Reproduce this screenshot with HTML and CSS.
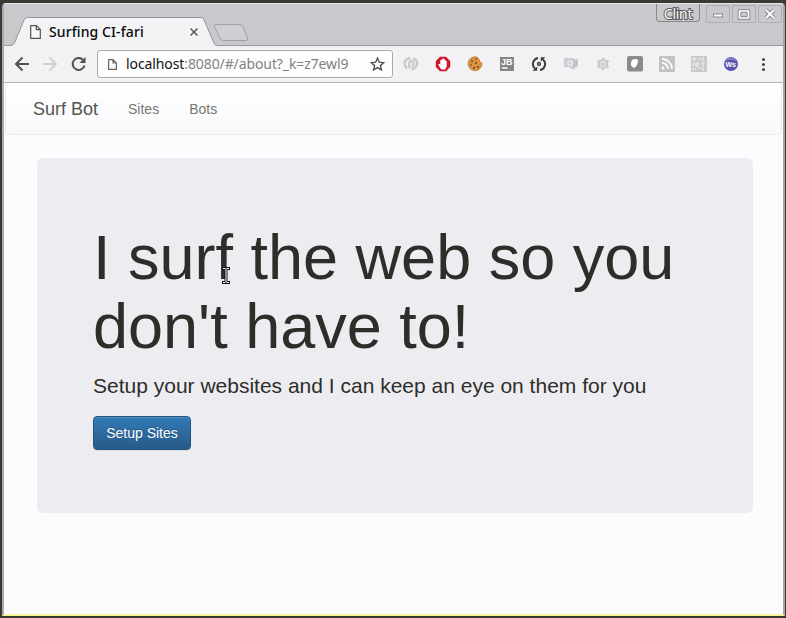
FILE: index.html
```html
<!DOCTYPE html>
<html lang="en">
<head>
<meta charset="utf-8">
<title>Surfing CI-fari</title>
<link rel="stylesheet" href="styles.css">
</head>
<body>
<div class="window">
  <div class="tabstrip">
    <div class="tab">
      <svg class="tab-shape" width="208" height="29" viewBox="0 0 208 29"><path d="M0 28.5H2Q3.500 28.500 4.500 26L14 3Q15 .5 17 .5H191Q193 .5 194 3L204 26Q205 28.500 207 28.500V29H0Z" fill="#f3f3f6"/><path d="M0 28.500Q3.500 28.500 4.500 26L14 3Q15 .5 17 .5H191Q193 .5 194 3L204 26Q205 28.500 207 28.500H208" fill="none" stroke="#96969a"/></svg>
      <svg class="tab-page" width="11" height="14" viewBox="0 0 11 14"><path d="M.7.7H6.500L10.300 4.500V13.300H.7ZM6.300.7V4.700H10.300" fill="#fafafa" stroke="#55554f" stroke-width="1.200"/></svg>
      <span class="tab-title">Surfing CI-fari</span>
      <svg class="tab-close" width="8" height="8" viewBox="0 0 8 8"><path d="M.5.5 7.500 7.500M7.500.5.5 7.500" stroke="#5a5a58" stroke-width="1.500"/></svg>
    </div>
    <svg class="new-tab" width="36" height="19" viewBox="0 0 36 19"><path d="M3 1.500H27Q29 1.500 30 3.500L34.500 15Q35 17.500 33 17.500H10Q8 17.500 7 15.500L1.500 3.500Q1 1.500 3 1.500Z" fill="#cfcfd3" stroke="#a09fa3"/></svg>
    <div class="controls">
      <span class="user">Clint</span>
      <span class="ctl"><svg width="22" height="18"><path d="M6 9.500H16" stroke="#8b8b8e" stroke-width="4"/><path d="M7 9.500H15" stroke="#fff" stroke-width="2"/></svg></span>
      <span class="ctl"><svg width="22" height="18"><path d="M6.500 5H15.500V12H6.500Z" fill="none" stroke="#8b8b8e" stroke-width="3.600"/><path d="M6.500 5H15.500V12H6.500Z" fill="none" stroke="#fff" stroke-width="1.700"/></svg></span>
      <span class="ctl"><svg width="22" height="18"><path d="M7 4 15 12M15 4 7 12" stroke="#8b8b8e" stroke-width="4"/><path d="M7 4 15 12M15 4 7 12" stroke="#fff" stroke-width="2"/></svg></span>
    </div>
  </div>
  <div class="toolbar">
    <svg class="nav-icons" width="76" height="18" viewBox="0 0 76 18"><g fill="none" stroke-width="2"><path d="M15 9H3M8.500 2.500 2 9 8.500 15.500" stroke="#50504e"/><path d="M29 9H41M35.500 2.500 42 9 35.500 15.500" stroke="#d0d0d1"/><path d="M69 4.800A6 6 0 1 0 70.500 10.500" stroke="#50504e"/></g><path d="M71.500 2V8H65.500Z" fill="#50504e"/></svg>
    <div class="address">
      <svg class="url-page" width="9" height="11" viewBox="0 0 9 11"><path d="M.6.6H5L8.400 4V10.400H.6ZM5 .6V4H8.400" fill="none" stroke="#666663" stroke-width="1.200"/></svg>
      <span class="url"><b>localhost</b>:8080/#/about?_k=z7ewl9</span>
      <svg class="star" width="15" height="14" viewBox="0 0 15 14"><path d="M7.500 1.200 9.300 5.200 13.700 5.700 10.400 8.600 11.400 12.900 7.500 10.600 3.600 12.900 4.600 8.600 1.300 5.700 5.700 5.200Z" fill="none" stroke="#50504e" stroke-width="1.400"/></svg>
    </div>
    <div class="extensions">
      <svg width="16" height="16" viewBox="0 0 16 16"><g fill="none" stroke="#cacacc" stroke-width="2.400"><path d="M7 2Q1 4 1.500 8 2 11 4 12.500M9 4Q4.500 6.500 7 12.500"/><path d="M10 2.500Q15 4 14 8.500 13 12.500 8.500 13.500M9.500 5Q12 8 9 11"/></g></svg>
      <svg width="16" height="16" viewBox="0 0 16 16"><path d="M5 .8H11L15.200 5V11L11 15.200H5L.8 11V5Z" fill="#d2142c"/><path d="M5.500 12.500 3.200 8.500 4.300 7.800 5.300 9V4H6.600V3H8V2.500H9V3.500H10.400V5H11.700V10.500L10 13.500H6.500Z" fill="#fff"/></svg>
      <svg width="16" height="16" viewBox="0 0 16 16"><path d="M10 1A7 7 0 1 0 15 7L13 6 12 3Z" fill="#d99342" stroke="#bd7426" stroke-width=".7"/><g fill="#68401f"><circle cx="5" cy="5" r=".9"/><circle cx="9" cy="7" r=".9"/><circle cx="4" cy="9" r=".8"/><circle cx="11" cy="11" r="1"/><circle cx="7" cy="12" r=".9"/><circle cx="9" cy="3" r=".8"/></g></svg>
      <svg width="16" height="16" viewBox="0 0 16 16"><path d="M1 1H15V15H1Z" fill="#858587"/><text x="2" y="9" class="jb">JB</text><path d="M3 12H8.500" stroke="#fff" stroke-width="1.300"/></svg>
      <svg width="16" height="16" viewBox="0 0 16 16"><g fill="none" stroke="#3c3c3a" stroke-width="2"><path d="M7 2A6.100 6.100 0 0 0 4 12.600"/><path d="M9 14A6.100 6.100 0 0 0 12 3.400"/><circle cx="8" cy="8" r="1.400" stroke-width="1.500"/></g><path d="M1.500 14.800H6.200V10.500ZM14.500 1.200H9.800V5.500Z" fill="#3c3c3a"/></svg>
      <svg width="16" height="16" viewBox="0 0 16 16"><path d="M1 2H11V3H15V11H12V13H9L6 11H1Z" fill="#cdcdd1"/><circle cx="7" cy="7" r="2.200" fill="none" stroke="#eeeef2" stroke-width="1.300"/><path d="M11.500 4V11M13.500 5V9" stroke="#b8b8bc"/></svg>
      <svg width="16" height="16" viewBox="0 0 16 16"><path d="M8 1 9.500 3.500 14 4.500 12.800 8 14 11.500 9.500 12.500 8 15 6.500 12.500 2 11.500 3.200 8 2 4.500 6.500 3.500Z" fill="#c6c6c8"/><circle cx="8" cy="8" r="3" fill="none" stroke="#eeeef0"/><path d="M8 5V9" stroke="#eee"/></svg>
      <svg width="16" height="16" viewBox="0 0 16 16"><rect width="16" height="15.500" rx="2" fill="#8b8b8d"/><path d="M5 4Q9 2 11 4Q11 10 7 12Q2 10 5 4Z" fill="#fff"/></svg>
      <svg width="16" height="16" viewBox="0 0 16 16"><rect width="16" height="16" rx="1" fill="#c2c2c5"/><g fill="none" stroke="#fafafa" stroke-width="1.800"><path d="M3 3A10 10 0 0 1 13 13M3 7A6 6 0 0 1 9 13"/></g><circle cx="4" cy="12" r="1.400" fill="#fff"/></svg>
      <svg width="16" height="16" viewBox="0 0 16 16"><rect width="16" height="16" fill="#cacacc"/><g fill="none" stroke="#f1f1f3" stroke-width="1.200"><path d="M1 3H5M3 1V5M7 3H10M12 1V5M1 13H5M7 12H10M12 11V15M2 7V10M5 7H7V10H5ZM10 7H14M12 7V10"/></g></svg>
      <svg width="16" height="16" viewBox="0 0 16 16"><circle cx="8" cy="8" r="7" fill="#5b55b0"/><path d="M2 5A7 7 0 0 1 14 5Q8 2 2 5Z" fill="#8984cb"/><text x="2.500" y="11" class="ws">Ws</text></svg>
      <svg width="16" height="16" viewBox="0 0 16 16" fill="#454542"><circle cx="8.500" cy="3.500" r="1.500"/><circle cx="8.500" cy="8.500" r="1.500"/><circle cx="8.500" cy="13.500" r="1.500"/></svg>
    </div>
  </div>
  <main class="page">
    <nav class="navbar"><a class="brand">Surf Bot</a><a class="link">Sites</a><a class="link">Bots</a></nav>
    <section class="jumbotron">
      <h1>I surf the web so you<br>don't have to!</h1>
      <p>Setup your websites and I can keep an eye on them for you</p>
      <button class="setup">Setup Sites</button>
    </section>
  </main>
</div>
<svg class="cursor" width="8" height="17" viewBox="0 0 8 17"><path d="M0 0H8V3H5.500V14H8V17H0V14H2.500V3H0Z" fill="#111"/><path d="M1 1H3.500V2H4.500V1H7V2H4.500V15H7V16H4.500V15H3.500V16H1V15H3.500V2H1Z" fill="#fff"/></svg>
</body>
</html>
```

FILE: styles.css
```css
* { box-sizing: border-box; }
body {
  margin: 0;
  width: 786px;
  height: 618px;
  overflow: hidden;
  background: #3b3932;
  font-family: "Liberation Sans", Arial, sans-serif;
}
svg { display: block; flex: none; }
.window {
  width: 783px;
  height: 613px;
  margin: 3px 1px 0 2px;
  border: 1px solid #e3e3e4;
  border-right: 2px solid #a6a6a9;
  border-left: 2px solid #aaaaac;
  border-bottom: 2px solid #f6f59a;
  border-radius: 4px 4px 0 0;
  background: #fcfcfe;
  overflow: hidden;
}
.tabstrip {
  display: flex;
  align-items: flex-end;
  height: 42px;
  background: #c9c8cc;
  border-bottom: 1px solid #99999c;
}
.tab {
  position: relative;
  display: flex;
  align-items: center;
  width: 208px;
  height: 29px;
  margin: 0 0 -1px 6px;
  padding-left: 20px;
}
.tab-shape { position: absolute; left: 0; top: 0; }
.tab-page, .tab-close { position: relative; }
.tab-title {
  position: relative;
  width: 141px;
  margin-left: 8px;
  font: 500 14px/20px "Noto Sans", sans-serif;
  letter-spacing: 0.1px;
  white-space: nowrap;
  color: #080808;
}
.new-tab { margin: 0 0 3px -5px; }
.controls {
  display: flex;
  align-self: flex-start;
  gap: 2px;
  margin: 0 1px 0 auto;
}
.user {
  width: 44px;
  height: 18px;
  margin-right: 4px;
  border: 1px solid #88888a;
  border-top: 0;
  border-radius: 0 0 4px 4px;
  font: 14px/19px "Noto Sans", sans-serif;
  letter-spacing: -0.3px;
  text-align: center;
  color: #fff;
  -webkit-text-stroke: 2px #555;
  paint-order: stroke fill;
}
.ctl {
  width: 24px;
  height: 18px;
  margin-top: 1px;
  border: 1px solid #afafb1;
  border-radius: 2px;
}
.toolbar {
  display: flex;
  align-items: center;
  height: 37px;
  padding-left: 10px;
  background: #f2f2f5;
  border-bottom: 1px solid #b8b8ba;
}
.address {
  display: flex;
  align-items: center;
  width: 296px;
  height: 28px;
  margin-left: 7px;
  padding: 0 7px 0 10px;
  border: 1px solid #aaaaac;
  border-radius: 3px;
  background: #fdfdfe;
}
.url {
  margin-left: 9px;
  font: 14px/20px "Noto Sans", sans-serif;
  letter-spacing: -0.1px;
  white-space: nowrap;
  color: #82827c;
}
.url b { font-weight: 400; color: #111; }
.star { margin-left: auto; }
.extensions { display: flex; gap: 16px; margin-left: 10px; }
.jb { font: bold 9px "Liberation Sans", sans-serif; fill: #fff; }
.ws { font: bold 7px "Liberation Sans", sans-serif; fill: #fff; }
.page { padding: 0 1px; }
.navbar {
  display: flex;
  align-items: center;
  gap: 30px;
  height: 52px;
  padding: 1px 0 0 27px;
  border: 1px solid #e9e9ee;
  border-top: 0;
  border-radius: 4px;
  background: linear-gradient(#fff, #f9f8fb);
}
.brand { font-size: 18px; color: #555550; }
.link { font-size: 14px; color: #777771; }
.jumbotron {
  width: 716px;
  height: 355px;
  margin: 23px 0 0 32px;
  padding: 65px 0 0 56px;
  border-radius: 6px;
  background: #ededf1;
  color: #2d2d2a;
}
h1 {
  margin: 0;
  font-size: 63px;
  font-weight: 500;
  line-height: 69.3px;
  white-space: nowrap;
}
.jumbotron p {
  margin: 9px 0 15px;
  font-size: 21px;
  line-height: 30px;
  white-space: nowrap;
}
.setup {
  display: block;
  width: 98px;
  height: 34px;
  padding: 0;
  border: 1px solid #245580;
  border-radius: 4px;
  background: linear-gradient(#337ab7, #265a88);
  box-shadow: inset 0 1px 0 rgba(255, 255, 255, .15), 0 1px 1px rgba(0, 0, 0, .075);
  font: 14px/20px "Liberation Sans", sans-serif;
  text-shadow: 0 -1px 0 rgba(0, 0, 0, .2);
  color: #fff;
}
.cursor { position: absolute; left: 222px; top: 267px; }
```
